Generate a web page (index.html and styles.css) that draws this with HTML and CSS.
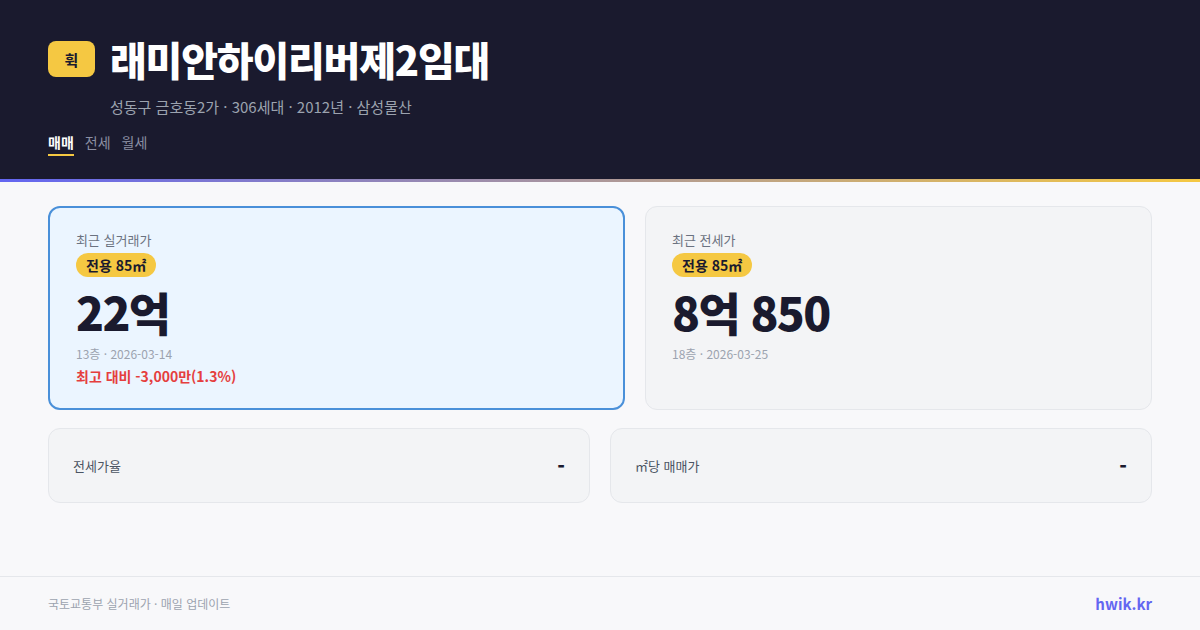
FILE: index.html
```html
<!DOCTYPE html>
<html lang="ko">
<head>
<meta charset="utf-8">
<link rel="stylesheet" href="styles.css">
</head>
<body>
<div class="page">
  <header class="hero">
    <div class="title-row">
      <span class="logo">휙</span>
      <h1 class="title">래미안하이리버제2임대</h1>
    </div>
    <div class="sub">성동구 금호동2가 · 306세대 · 2012년 · 삼성물산</div>
    <nav class="tabs">
      <span class="tab active">매매</span>
      <span class="tab">전세</span>
      <span class="tab">월세</span>
    </nav>
  </header>
  <div class="accent"></div>
  <main class="main">
    <div class="cards">
      <section class="card primary">
        <div class="label">최근 실거래가</div>
        <span class="pill">전용 85㎡</span>
        <div class="price">22억</div>
        <div class="meta">13층 · 2026-03-14</div>
        <div class="diff">최고 대비 -3,000만(1.3%)</div>
      </section>
      <section class="card">
        <div class="label">최근 전세가</div>
        <span class="pill">전용 85㎡</span>
        <div class="price">8억 850</div>
        <div class="meta">18층 · 2026-03-25</div>
      </section>
    </div>
    <div class="stats">
      <div class="stat"><span class="stat-label">전세가율</span><span class="stat-value">-</span></div>
      <div class="stat"><span class="stat-label">㎡당 매매가</span><span class="stat-value">-</span></div>
    </div>
  </main>
  <footer class="footer">
    <span class="src">국토교통부 실거래가 · 매일 업데이트</span>
    <span class="brand">hwik.kr</span>
  </footer>
</div>
</body>
</html>
```

FILE: styles.css
```css
* { box-sizing: border-box; margin: 0; padding: 0; }
html, body { width: 1200px; height: 630px; overflow: hidden; }
body {
  font-family: "Noto Sans CJK KR", "Noto Sans", sans-serif;
  background: #f8f8fa;
  color: #1a1a2e;
}
.page { display: flex; flex-direction: column; height: 630px; }
.hero {
  background: #1a1a2e;
  height: 179px;
  padding: 33px 48px 0;
}
.title-row { display: flex; align-items: center; gap: 15px; }
.logo {
  width: 47px; height: 36px;
  background: #f5c842;
  border-radius: 8px;
  display: flex; align-items: center; justify-content: center;
  font-size: 15px; font-weight: 700; color: #1a1a2e;
}
.title {
  font-size: 40px; font-weight: 900; color: #fff;
  letter-spacing: -1.2px; line-height: 52px;
}
.sub {
  margin: 12px 0 0 62px;
  font-size: 15px; color: #9ca3af; line-height: 20px;
}
.tabs { display: flex; gap: 11px; margin-top: 15px; }
.tab {
  font-size: 14px; color: #8b8fa3; line-height: 20px;
  padding-bottom: 2px;
  border-bottom: 2px solid transparent;
}
.tab.active { color: #fff; font-weight: 700; border-bottom-color: #f5c842; }
.accent {
  height: 3px;
  background: linear-gradient(90deg, #6366f1, #f5c842);
}
.main { flex: 1; padding: 24px 48px 0; }
.cards { display: grid; grid-template-columns: 577px 1fr; gap: 20px; }
.card {
  height: 204px;
  background: #f3f4f6;
  border: 1px solid #e5e7eb;
  border-radius: 12px;
  padding: 24px 26px;
  display: flex; flex-direction: column; align-items: flex-start;
}
.card.primary {
  background: #ebf5ff;
  border: 2px solid #4a90d9;
  padding: 23px 26px;
}
.label { font-size: 13px; color: #6b7280; line-height: 18px; }
.pill {
  margin-top: 4px;
  background: #f5c842;
  border-radius: 12px;
  padding: 0 10px;
  height: 24px; line-height: 24px;
  font-size: 14px; font-weight: 700; color: #1a1a2e;
}
.price {
  font-size: 46px; font-weight: 900; color: #1a1a2e;
  line-height: 50px; letter-spacing: -1.6px; margin-top: 9px;
}
.meta { font-size: 12px; color: #9ca3af; line-height: 18px; margin-top: 9px; }
.diff { font-size: 14px; font-weight: 700; color: #e53e3e; line-height: 20px; margin-top: 3px; }
.stats { display: grid; grid-template-columns: 1fr 1fr; gap: 20px; margin-top: 18px; }
.stat {
  height: 75px;
  background: #f3f4f6;
  border: 1px solid #e5e7eb;
  border-radius: 12px;
  padding: 0 24px;
  display: flex; align-items: center; justify-content: space-between;
}
.stat-label { font-size: 13px; color: #4b5563; }
.stat-value { font-size: 20px; font-weight: 900; color: #1a1a2e; }
.footer {
  height: 54px;
  border-top: 1px solid #e5e7eb;
  padding: 0 48px;
  display: flex; align-items: center; justify-content: space-between;
}
.src { font-size: 12px; color: #9ca3af; }
.brand { font-size: 15px; font-weight: 700; color: #6366f1; }
```
